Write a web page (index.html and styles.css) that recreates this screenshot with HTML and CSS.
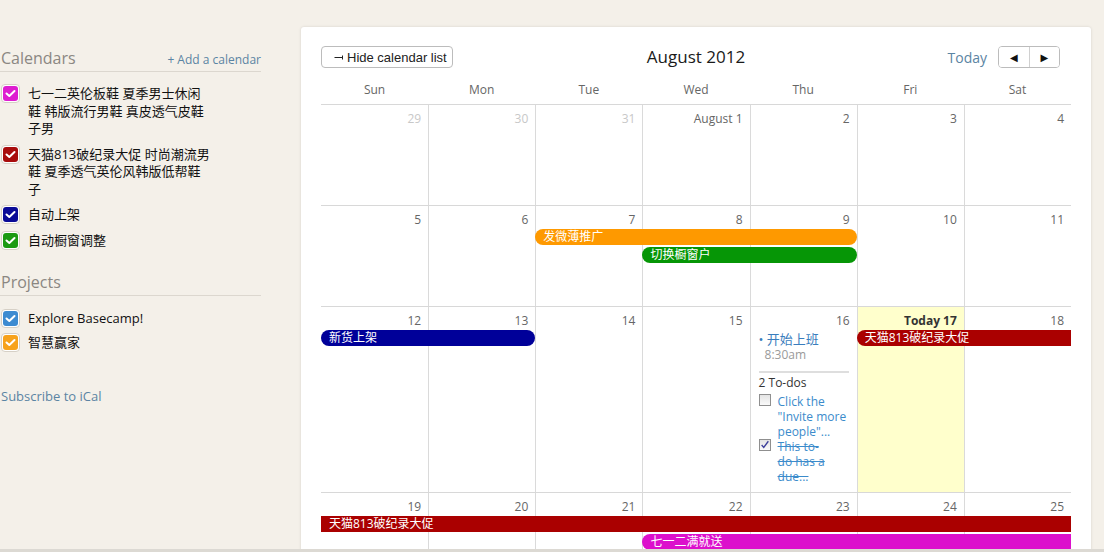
FILE: index.html
```html
<!DOCTYPE html>
<html lang="en">
<head>
<meta charset="utf-8">
<title>Calendar</title>
<link rel="stylesheet" href="styles.css">
</head>
<body>
<div class="app">
  <aside class="sidebar">
    <div class="sec-head">
      <h2 class="sec-title">Calendars</h2>
      <a class="add-link" href="#">+ Add a calendar</a>
    </div>
    <ul class="cal-list">
      <li class="cal-item"><span class="cb"><span class="cb-inner c-magenta"><svg viewBox="0 0 15 15" width="15" height="15"><path d="M3.5 7.5 L6.3 10 L11.5 5" fill="none" stroke="#fff" stroke-width="2" stroke-linecap="round" stroke-linejoin="round"/></svg></span></span><span class="cal-name">七一二英伦板鞋 夏季男士休闲鞋 韩版流行男鞋 真皮透气皮鞋子男</span></li>
      <li class="cal-item"><span class="cb"><span class="cb-inner c-red"><svg viewBox="0 0 15 15" width="15" height="15"><path d="M3.5 7.5 L6.3 10 L11.5 5" fill="none" stroke="#fff" stroke-width="2" stroke-linecap="round" stroke-linejoin="round"/></svg></span></span><span class="cal-name">天猫813破纪录大促 时尚潮流男鞋 夏季透气英伦风韩版低帮鞋子</span></li>
      <li class="cal-item"><span class="cb"><span class="cb-inner c-navy"><svg viewBox="0 0 15 15" width="15" height="15"><path d="M3.5 7.5 L6.3 10 L11.5 5" fill="none" stroke="#fff" stroke-width="2" stroke-linecap="round" stroke-linejoin="round"/></svg></span></span><span class="cal-name">自动上架</span></li>
      <li class="cal-item"><span class="cb"><span class="cb-inner c-green"><svg viewBox="0 0 15 15" width="15" height="15"><path d="M3.5 7.5 L6.3 10 L11.5 5" fill="none" stroke="#fff" stroke-width="2" stroke-linecap="round" stroke-linejoin="round"/></svg></span></span><span class="cal-name">自动橱窗调整</span></li>
    </ul>
    <div class="sec-head sec-projects">
      <h2 class="sec-title">Projects</h2>
    </div>
    <ul class="cal-list proj-list">
      <li class="cal-item"><span class="cb"><span class="cb-inner c-blue"><svg viewBox="0 0 15 15" width="15" height="15"><path d="M3.5 7.5 L6.3 10 L11.5 5" fill="none" stroke="#fff" stroke-width="2" stroke-linecap="round" stroke-linejoin="round"/></svg></span></span><span class="cal-name">Explore Basecamp!</span></li>
      <li class="cal-item"><span class="cb"><span class="cb-inner c-orange"><svg viewBox="0 0 15 15" width="15" height="15"><path d="M3.5 7.5 L6.3 10 L11.5 5" fill="none" stroke="#fff" stroke-width="2" stroke-linecap="round" stroke-linejoin="round"/></svg></span></span><span class="cal-name">智慧赢家</span></li>
    </ul>
    <a class="ical" href="#">Subscribe to iCal</a>
  </aside>

  <main class="panel">
    <div class="toolbar">
      <div class="tb-left">
        <button class="hide-btn" type="button"><svg class="hide-icon" viewBox="0 0 9 7" width="9" height="7"><path d="M0.5 3.5 H8.5 M8.5 1.5 V5.5" fill="none" stroke="#222" stroke-width="1"/></svg><span>Hide calendar list</span></button>
      </div>
      <h1 class="month-title">August 2012</h1>
      <div class="tb-right">
        <a class="today-link" href="#">Today</a>
        <div class="pager"><button type="button" class="pg">&#9664;</button><button type="button" class="pg">&#9654;</button></div>
      </div>
    </div>

    <div class="weekdays">
      <div>Sun</div><div>Mon</div><div>Tue</div><div>Wed</div><div>Thu</div><div>Fri</div><div>Sat</div>
    </div>

    <div class="week">
      <div class="day muted">29</div>
      <div class="day muted">30</div>
      <div class="day muted">31</div>
      <div class="day">August 1</div>
      <div class="day">2</div>
      <div class="day">3</div>
      <div class="day">4</div>
    </div>

    <div class="week">
      <div class="day">5</div>
      <div class="day">6</div>
      <div class="day">7</div>
      <div class="day">8</div>
      <div class="day">9</div>
      <div class="day">10</div>
      <div class="day">11</div>
      <div class="ev ev-orange round-l round-r" style="grid-column:3 / 6; grid-row:2">发微薄推广</div>
      <div class="ev ev-green round-l round-r" style="grid-column:4 / 6; grid-row:3">切换橱窗户</div>
    </div>

    <div class="week">
      <div class="day">12</div>
      <div class="day">13</div>
      <div class="day">14</div>
      <div class="day">15</div>
      <div class="day">16</div>
      <div class="day today">Today 17</div>
      <div class="day">18</div>
      <div class="ev ev-navy round-l round-r" style="grid-column:1 / 3; grid-row:2">新货上架</div>
      <div class="ev ev-red round-l" style="grid-column:6 / 8; grid-row:2">天猫813破纪录大促</div>
      <div class="day-items">
        <a class="item-title" href="#">&bull; 开始上班</a>
        <div class="item-time">8:30am</div>
        <div class="item-sep"></div>
        <div class="todo-count">2 To-dos</div>
        <div class="todo">
          <span class="tcb"></span>
          <a class="todo-text" href="#">Click the "Invite more people"...</a>
        </div>
        <div class="todo done">
          <span class="tcb"><svg viewBox="0 0 12 12" width="10" height="10"><path d="M2 6 L4.5 9 L10 1.5" fill="none" stroke="#3c3f9a" stroke-width="1.6"/></svg></span>
          <a class="todo-text narrow" href="#">This to-do has a due...</a>
        </div>
      </div>
    </div>

    <div class="week">
      <div class="day">19</div>
      <div class="day">20</div>
      <div class="day">21</div>
      <div class="day">22</div>
      <div class="day">23</div>
      <div class="day">24</div>
      <div class="day">25</div>
      <div class="ev ev-red" style="grid-column:1 / 8; grid-row:2">天猫813破纪录大促</div>
      <div class="ev ev-magenta round-l" style="grid-column:4 / 8; grid-row:3">七一二满就送</div>
    </div>
  </main>
</div>
<div class="bottom-bar"></div>
</body>
</html>
```

FILE: styles.css
```css
html, body {
  margin: 0;
  padding: 0;
}

body {
  background: #f4f0e9;
  font-family: "Open Sans", "Noto Sans CJK SC", sans-serif;
  color: #222;
  overflow: hidden;
  height: 552px;
}

a {
  text-decoration: none;
}

.app {
  display: flex;
  align-items: flex-start;
}

/* ---------- Sidebar ---------- */
.sidebar {
  flex: none;
  width: 261px;
  padding-top: 48px;
}

.sec-head {
  display: flex;
  justify-content: space-between;
  align-items: baseline;
  padding: 0 0 3px 1px;
  border-bottom: 1px solid #dcd7cf;
}

.sec-title {
  margin: 0;
  font-size: 16px;
  line-height: 20px;
  font-weight: normal;
  color: #8b8782;
}

.add-link {
  font-size: 12px;
  color: #5b84a3;
}

.sec-projects {
  margin-top: 22px;
}

.cal-list {
  list-style: none;
  margin: 13px 0 0;
  padding: 0;
  display: flex;
  flex-direction: column;
  gap: 8px;
}

.proj-list {
  margin-top: 14px;
  gap: 6px;
}

.cal-item {
  display: flex;
  align-items: flex-start;
  gap: 8px;
  font-size: 13px;
  line-height: 17.5px;
  color: #111;
}

.cal-name {
  width: 184px;
}

.cb {
  flex: none;
  box-sizing: border-box;
  width: 19px;
  height: 19px;
  margin: -1px 0 0 1px;
  padding: 1px;
  border: 1px solid #d6d0c6;
  border-radius: 4px;
  background: #fff;
}

.cb-inner {
  display: block;
  width: 15px;
  height: 15px;
  border-radius: 3px;
}

.cb-inner svg {
  display: block;
}

.c-magenta { background: #de1dd0; }
.c-red { background: #a80c0c; }
.c-navy { background: #0a0a96; }
.c-green { background: #1b9a12; }
.c-blue { background: #3d8bd1; }
.c-orange { background: #f7a21c; }

.ical {
  display: block;
  margin-top: 36px;
  padding-left: 1px;
  font-size: 13px;
  line-height: 16px;
  color: #5b84a3;
}

/* ---------- Panel ---------- */
.panel {
  flex: none;
  box-sizing: border-box;
  width: 790px;
  margin: 27px 0 0 40px;
  padding: 19px 20px 0;
  height: 560px;
  background: #fff;
  border-radius: 3px 3px 0 0;
  box-shadow: 0 0 3px rgba(0, 0, 0, 0.13);
}

.toolbar {
  display: grid;
  grid-template-columns: 1fr auto 1fr;
  align-items: center;
  height: 22px;
}

.tb-left {
  justify-self: start;
}

.hide-btn {
  box-sizing: border-box;
  display: flex;
  align-items: center;
  gap: 4px;
  width: 132px;
  height: 22px;
  padding: 0 0 0 12px;
  border: 1px solid #bcbcbc;
  border-radius: 4px;
  background: #fff;
  font-family: "Liberation Sans", Arial, sans-serif;
  font-size: 13px;
  color: #222;
}

.hide-icon {
  display: block;
}

.month-title {
  margin: 0;
  font-size: 17px;
  line-height: 22px;
  font-weight: normal;
  color: #1a1a1a;
}

.tb-right {
  justify-self: end;
  display: flex;
  align-items: center;
  gap: 11px;
  margin-right: 11px;
}

.today-link {
  font-size: 14px;
  color: #5b84a3;
}

.pager {
  display: flex;
  box-sizing: border-box;
  width: 62px;
  height: 22px;
  border: 1px solid #bcbcbc;
  border-radius: 4px;
  overflow: hidden;
}

.pg {
  flex: 1;
  padding: 0;
  border: 0;
  background: #fff;
  font-family: "DejaVu Sans", sans-serif;
  font-size: 10px;
  color: #111;
}

.pg + .pg {
  border-left: 1px solid #d0d0d0;
}

.weekdays {
  display: grid;
  grid-template-columns: repeat(7, 1fr);
  align-items: end;
  height: 36px;
  font-size: 12px;
  line-height: 14px;
  color: #666;
  text-align: center;
}

.weekdays div {
  padding-bottom: 7px;
}

/* ---------- Weeks ---------- */
.week {
  display: grid;
  grid-template-columns: repeat(7, 1fr);
  grid-template-rows: 23px 18px 18px 1fr;
  min-height: 100px;
  border-top: 1px solid #d8d8d8;
}

.day {
  grid-row: 1 / -1;
  padding: 6px 7px 0 0;
  border-left: 1px solid #dadada;
  text-align: right;
  font-size: 12px;
  line-height: 15px;
  color: #666;
}

.day:nth-child(1) { grid-column: 1; border-left: 0; }
.day:nth-child(2) { grid-column: 2; }
.day:nth-child(3) { grid-column: 3; }
.day:nth-child(4) { grid-column: 4; }
.day:nth-child(5) { grid-column: 5; }
.day:nth-child(6) { grid-column: 6; }
.day:nth-child(7) { grid-column: 7; }

.day.muted {
  color: #c8c8c8;
}

.day.today {
  background: #ffffcc;
  color: #333;
  font-weight: bold;
}

.ev {
  align-self: start;
  z-index: 1;
  height: 16px;
  padding-left: 8px;
  overflow: hidden;
  white-space: nowrap;
  font-size: 12px;
  line-height: 16px;
  color: #fff;
}

.round-l {
  border-top-left-radius: 8px;
  border-bottom-left-radius: 8px;
}

.round-r {
  border-top-right-radius: 8px;
  border-bottom-right-radius: 8px;
}

.ev-orange { background: #fe9900; }
.ev-green { background: #069606; }
.ev-navy { background: #000099; }
.ev-red { background: #aa0000; }
.ev-magenta { background: #dc10cc; }

.day-items {
  grid-column: 5;
  grid-row: 2 / -1;
  z-index: 1;
  padding: 2px 8px 8px 9px;
}

.item-title {
  display: block;
  font-size: 13px;
  line-height: 15px;
  color: #3a7dbd;
}

.item-time {
  margin-top: 1px;
  padding-left: 6px;
  font-size: 12px;
  line-height: 14px;
  color: #9a9a9a;
}

.item-sep {
  height: 2px;
  margin-top: 9px;
  background: #dedede;
}

.todo-count {
  margin-top: 3px;
  font-size: 12px;
  line-height: 14px;
  color: #333;
}

.todo {
  display: flex;
  align-items: flex-start;
  gap: 7px;
  font-size: 12px;
  line-height: 15px;
}

.todo-count + .todo {
  margin-top: 4px;
}

.tcb {
  flex: none;
  box-sizing: border-box;
  display: flex;
  align-items: center;
  justify-content: center;
  width: 12px;
  height: 12px;
  margin-top: 0;
  border: 1px solid #8f8f8f;
  background: linear-gradient(#e4e4e4, #fafafa);
}

.todo-text {
  color: #3b8bcb;
}

.todo-text.narrow {
  width: 49px;
}

.done .todo-text {
  text-decoration: line-through;
}

.bottom-bar {
  position: fixed;
  left: 0;
  right: 0;
  bottom: 0;
  height: 3px;
  background: #dcd9d3;
  z-index: 5;
}
```
